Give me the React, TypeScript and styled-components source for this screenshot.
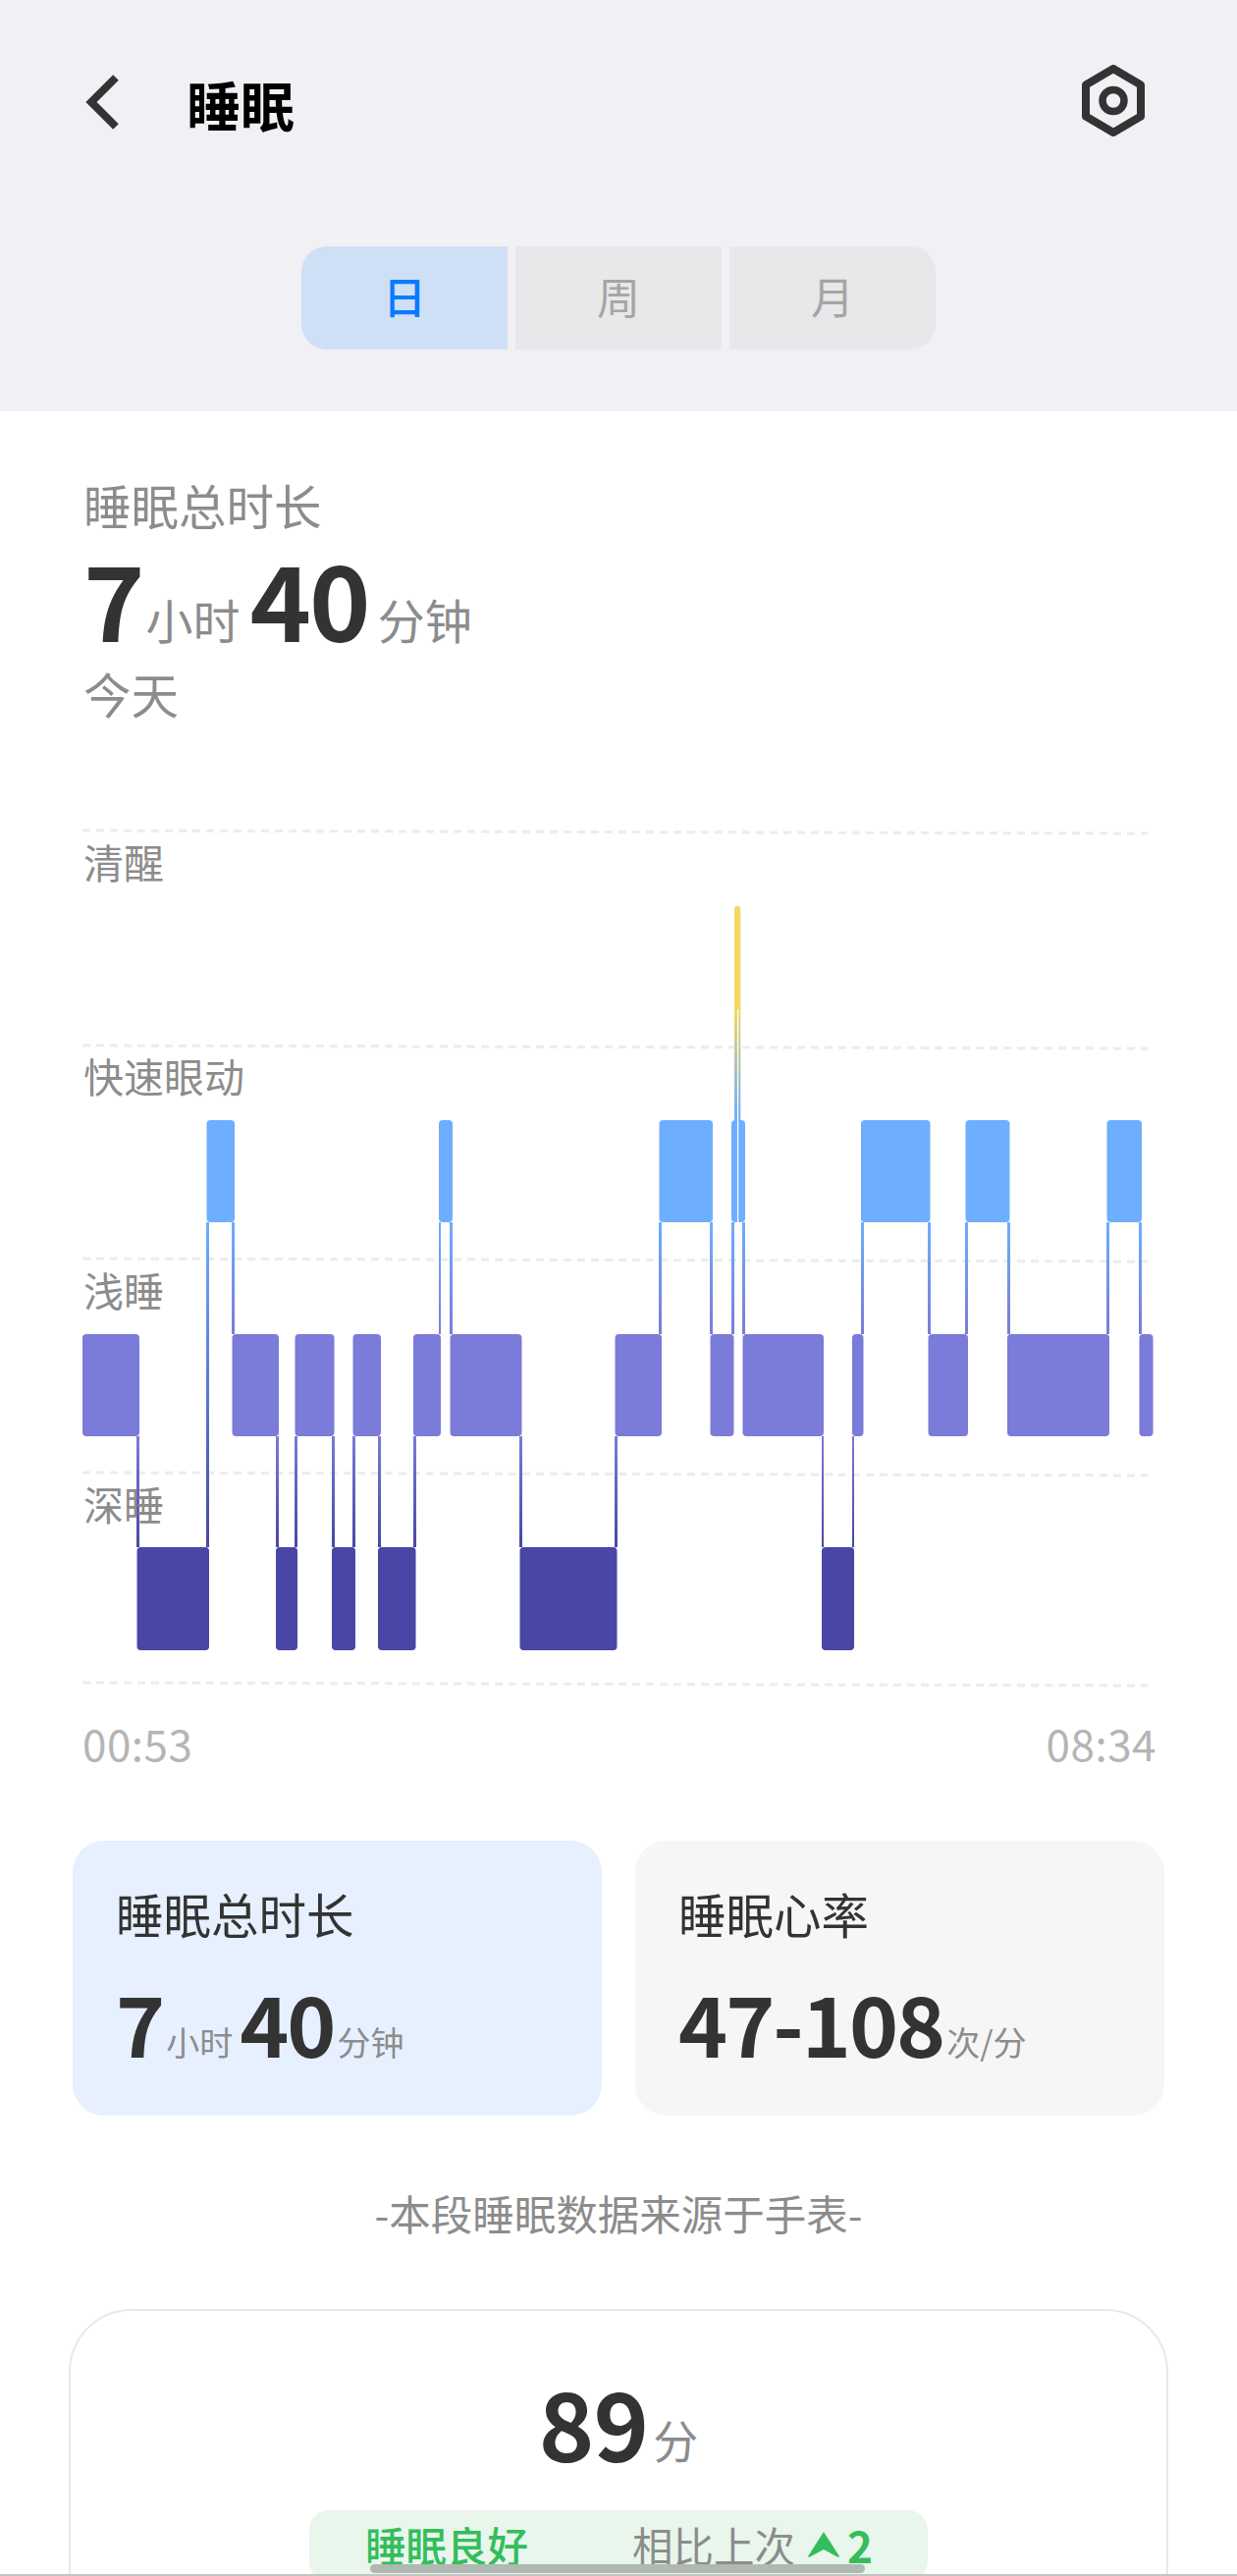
import React from 'react';
import styled, { createGlobalStyle } from 'styled-components';

type Stage = 'rem' | 'light' | 'deep';

interface Segment {
  stage: Stage;
  x0: number;
  x1: number;
}

const GlobalStyle = createGlobalStyle`
  html, body {
    margin: 0;
    padding: 0;
    background: #fff;
    font-family: "Noto Sans CJK SC", "Noto Sans", sans-serif;
  }
`;

const COLORS: Record<Stage, string> = {
  rem: '#6eaeff',
  light: '#7b7bd9',
  deep: '#4847a5',
};

// y range of each sleep stage on the chart
const LEVELS: Record<Stage, { top: number; bottom: number }> = {
  rem: { top: 1141, bottom: 1245 },
  light: { top: 1359, bottom: 1463 },
  deep: { top: 1576, bottom: 1681 },
};

const SEGMENTS: Segment[] = [
  { stage: 'light', x0: 84, x1: 142 },
  { stage: 'deep', x0: 139.5, x1: 213 },
  { stage: 'rem', x0: 210.5, x1: 239 },
  { stage: 'light', x0: 236.5, x1: 284 },
  { stage: 'deep', x0: 281, x1: 303 },
  { stage: 'light', x0: 300.5, x1: 340.5 },
  { stage: 'deep', x0: 338, x1: 362 },
  { stage: 'light', x0: 359.5, x1: 388 },
  { stage: 'deep', x0: 385, x1: 423.5 },
  { stage: 'light', x0: 421, x1: 449 },
  { stage: 'rem', x0: 447, x1: 461 },
  { stage: 'light', x0: 458.5, x1: 531.5 },
  { stage: 'deep', x0: 529.5, x1: 628.5 },
  { stage: 'light', x0: 626.5, x1: 674 },
  { stage: 'rem', x0: 671.5, x1: 726 },
  { stage: 'light', x0: 723.5, x1: 747.5 },
  { stage: 'rem', x0: 745, x1: 759 },
  { stage: 'light', x0: 756.5, x1: 839 },
  { stage: 'deep', x0: 837, x1: 870 },
  { stage: 'light', x0: 868, x1: 879.5 },
  { stage: 'rem', x0: 877, x1: 947.5 },
  { stage: 'light', x0: 945.5, x1: 986 },
  { stage: 'rem', x0: 983.5, x1: 1028.5 },
  { stage: 'light', x0: 1026, x1: 1130 },
  { stage: 'rem', x0: 1127.5, x1: 1163 },
  { stage: 'light', x0: 1160.5, x1: 1174.5 },
];

const GRID_LINES = [846, 1065, 1282, 1500, 1714];
const LANE_NAMES = ['清醒', '快速眼动', '浅睡', '深睡'];
const RANK: Record<Stage, number> = { rem: 0, light: 1, deep: 2 };

const SleepChart = () => {
  const links = SEGMENTS.slice(1).map((seg, i) => {
    const prev = SEGMENTS[i];
    const upper = RANK[prev.stage] < RANK[seg.stage] ? prev.stage : seg.stage;
    const lower = upper === prev.stage ? seg.stage : prev.stage;
    const x = Math.floor(seg.x0);
    return {
      key: i,
      x,
      width: Math.ceil(prev.x1) - x,
      y: LEVELS[upper].bottom,
      height: LEVELS[lower].top - LEVELS[upper].bottom,
      fill: `url(#${upper}-${lower})`,
    };
  });

  return (
    <ChartWrap>
      <ChartSvg viewBox="0 830 1260 900" width={1260} height={900}>
        <defs>
          <linearGradient id="rem-light" x1="0" x2="0" y1="0" y2="1">
            <stop offset="0" stopColor={COLORS.rem} />
            <stop offset="1" stopColor={COLORS.light} />
          </linearGradient>
          <linearGradient id="light-deep" x1="0" x2="0" y1="0" y2="1">
            <stop offset="0" stopColor={COLORS.light} />
            <stop offset="1" stopColor={COLORS.deep} />
          </linearGradient>
          <linearGradient id="rem-deep" x1="0" x2="0" y1="0" y2="1">
            <stop offset="0" stopColor={COLORS.rem} />
            <stop offset="1" stopColor={COLORS.deep} />
          </linearGradient>
          <linearGradient id="awake-rem" x1="0" x2="0" y1="0" y2="1">
            <stop offset="0" stopColor="#f6d862" />
            <stop offset="1" stopColor={COLORS.rem} />
          </linearGradient>
        </defs>

        {GRID_LINES.map((y) => (
          <line
            key={y}
            x1={84}
            y1={y}
            x2={1169}
            y2={y + 3}
            stroke="#ececec"
            strokeWidth={3}
            strokeDasharray="8 6"
          />
        ))}

        {links.map(({ key, ...link }) => (
          <rect key={key} {...link} />
        ))}

        {SEGMENTS.map((seg) => (
          <rect
            key={seg.x0}
            x={seg.x0}
            y={LEVELS[seg.stage].top}
            width={seg.x1 - seg.x0}
            height={LEVELS[seg.stage].bottom - LEVELS[seg.stage].top}
            rx={4}
            fill={COLORS[seg.stage]}
          />
        ))}

        {/* short wake-up spike, drawn over the rem block it rises from */}
        <rect x={748} y={1026} width={6.3} height={115} fill="url(#awake-rem)" />
        <rect x={748} y={923} width={6.3} height={105} rx={3} fill="#f6d862" />
        <rect x={751} y={1028} width={1.2} height={217} fill="#fff" />
      </ChartSvg>
      <LaneLabels>
        {LANE_NAMES.map((name) => (
          <LaneLabel key={name}>{name}</LaneLabel>
        ))}
      </LaneLabels>
    </ChartWrap>
  );
};

const App = () => {
  return (
    <Page>
      <GlobalStyle />
      <Header>
        <TopBar>
          <TitleGroup>
            <svg width="36" height="60" viewBox="0 0 36 60">
              <polyline
                points="31,6 6,31 31,56"
                fill="none"
                stroke="#333"
                strokeWidth="8"
              />
            </svg>
            <Title>睡眠</Title>
          </TitleGroup>
          <svg width="64" height="73" viewBox="0 0 64 73">
            <polygon
              points="32,4 60,20.5 60,52.5 32,69 4,52.5 4,20.5"
              fill="none"
              stroke="#333"
              strokeWidth="8"
              strokeLinejoin="round"
            />
            <circle cx="32" cy="36.5" r="11" fill="none" stroke="#333" strokeWidth="7.5" />
          </svg>
        </TopBar>
        <Tabs>
          <Tab $active>日</Tab>
          <Tab>周</Tab>
          <Tab>月</Tab>
        </Tabs>
      </Header>

      <Summary>
        <SummaryLabel>睡眠总时长</SummaryLabel>
        <BigRow>
          <BigNum>7</BigNum>
          <BigUnit>小时</BigUnit>
          <BigNum $gap={10}>40</BigNum>
          <BigUnit $gap={9}>分钟</BigUnit>
        </BigRow>
        <SummaryLabel>今天</SummaryLabel>
      </Summary>

      <SleepChart />

      <TimeRow>
        <span>00:53</span>
        <span>08:34</span>
      </TimeRow>

      <Cards>
        <Card $bg="#e6f0fe">
          <CardTitle>睡眠总时长</CardTitle>
          <CardValue>
            <CardNum>7</CardNum>
            <CardUnit>小时</CardUnit>
            <CardNum $gap={7}>40</CardNum>
            <CardUnit>分钟</CardUnit>
          </CardValue>
        </Card>
        <Card $bg="#f6f6f6">
          <CardTitle>睡眠心率</CardTitle>
          <CardValue>
            <CardNum>47-108</CardNum>
            <CardUnit>次/分</CardUnit>
          </CardValue>
        </Card>
      </Cards>

      <SourceNote>-本段睡眠数据来源于手表-</SourceNote>

      <ScoreCard>
        <ScoreRow>
          <ScoreNum>89</ScoreNum>
          <ScoreUnit>分</ScoreUnit>
        </ScoreRow>
        <ScorePill>
          <PillGood>睡眠良好</PillGood>
          <PillCompare>相比上次</PillCompare>
          <svg width="32" height="26" viewBox="0 0 32 26">
            <path d="M16 0 L32 25 Q32 26 30 25.5 L16 18 L2 25.5 Q0 26 0 25 Z" fill="#34bd5c" />
          </svg>
          <PillDelta>2</PillDelta>
        </ScorePill>
      </ScoreCard>

      <HomeIndicator />
      <BottomEdge />
    </Page>
  );
};

const Page = styled.div`
  position: relative;
  width: 1260px;
  height: 2624px;
  overflow: hidden;
  background: #fff;
`;

const Header = styled.header`
  height: 419px;
  box-sizing: border-box;
  padding-top: 66px;
  background: #f0f0f5;
`;

const TopBar = styled.div`
  display: flex;
  align-items: center;
  justify-content: space-between;
  height: 73px;
  padding: 0 94px 0 87px;
`;

const TitleGroup = styled.div`
  display: flex;
  align-items: center;
  gap: 67px;
`;

const Title = styled.h1`
  margin: 0;
  padding-top: 5px;
  font-size: 55px;
  line-height: 60px;
  font-weight: 700;
  color: #000;
`;

const Tabs = styled.div`
  display: flex;
  gap: 8px;
  width: 646px;
  height: 105px;
  margin: 112px auto 0;
  border-radius: 26px;
  overflow: hidden;
`;

const Tab = styled.div<{ $active?: boolean }>`
  flex: 1;
  display: flex;
  align-items: center;
  justify-content: center;
  padding-bottom: 5px;
  font-size: 44px;
  font-weight: ${({ $active }) => ($active ? 500 : 400)};
  color: ${({ $active }) => ($active ? '#0a7bff' : '#a5a5a5')};
  background: ${({ $active }) => ($active ? '#cfdff5' : '#e8e8ea')};
`;

const Summary = styled.section`
  padding: 65px 0 0 85px;
`;

const SummaryLabel = styled.div`
  font-size: 48.5px;
  line-height: 60px;
  color: #8c8c8c;
`;

const BigRow = styled.div`
  display: flex;
  align-items: flex-end;
  height: 132px;
  padding-bottom: 5px;
  box-sizing: border-box;
`;

const BigNum = styled.span<{ $gap?: number }>`
  margin: 0 0 10px ${({ $gap }) => $gap ?? 0}px;
  font-size: 106px;
  line-height: 106px;
  font-weight: 700;
  letter-spacing: -2px;
  color: #333;
`;

const BigUnit = styled.span<{ $gap?: number }>`
  margin: 0 0 17px ${({ $gap }) => $gap ?? 3}px;
  font-size: 48px;
  line-height: 47px;
  color: #8c8c8c;
`;

const ChartWrap = styled.div`
  position: relative;
  height: 900px;
  margin-top: 94px;
`;

const ChartSvg = styled.svg`
  display: block;
`;

const LaneLabels = styled.div`
  position: absolute;
  top: 27px;
  left: 85px;
  display: grid;
  grid-auto-rows: 218px;
`;

const LaneLabel = styled.div`
  font-size: 41px;
  line-height: 40px;
  color: #8c8c8c;
`;

const TimeRow = styled.div`
  display: flex;
  justify-content: space-between;
  margin-top: 20px;
  padding: 0 82px 0 84px;
  font-size: 44px;
  line-height: 50px;
  letter-spacing: 0.5px;
  color: #b5b5b5;
`;

const Cards = styled.div`
  display: grid;
  grid-template-columns: 539px 539px;
  gap: 34px;
  margin-top: 75px;
  padding: 0 74px;
`;

const Card = styled.div<{ $bg: string }>`
  height: 280px;
  box-sizing: border-box;
  padding: 50px 0 0 44px;
  border-radius: 32px;
  background: ${({ $bg }) => $bg};
`;

const CardTitle = styled.div`
  font-size: 48.5px;
  line-height: 48px;
  color: #333;
`;

const CardValue = styled.div`
  display: flex;
  align-items: flex-end;
  margin-top: 43px;
`;

const CardNum = styled.span<{ $gap?: number }>`
  margin: 0 0 8px ${({ $gap }) => $gap ?? 0}px;
  font-size: 85px;
  line-height: 85px;
  font-weight: 700;
  letter-spacing: -2px;
  color: #333;
`;

const CardUnit = styled.span`
  margin: 0 0 12px 3px;
  font-size: 34px;
  line-height: 34px;
  color: #8c8c8c;
`;

const SourceNote = styled.div`
  margin-top: 74px;
  text-align: center;
  font-size: 42.5px;
  line-height: 50px;
  color: #8c8c8c;
`;

const ScoreCard = styled.section`
  height: 340px;
  box-sizing: border-box;
  margin: 73px 70px 0;
  padding-top: 65px;
  border: 2px solid #e8e8e8;
  border-radius: 64px;
`;

const ScoreRow = styled.div`
  display: flex;
  align-items: flex-end;
  justify-content: center;
`;

const ScoreNum = styled.span`
  margin-bottom: 9px;
  font-size: 96px;
  line-height: 96px;
  font-weight: 700;
  letter-spacing: -1px;
  color: #333;
`;

const ScoreUnit = styled.span`
  margin: 0 0 17px 5px;
  font-size: 46px;
  line-height: 45px;
  color: #8c8c8c;
`;

const ScorePill = styled.div`
  display: flex;
  align-items: center;
  box-sizing: border-box;
  width: 630px;
  height: 72px;
  margin: 33px auto 0;
  padding: 0 0 2px 57px;
  border-radius: 20px;
  background: #e8f6ec;
  font-size: 41.5px;
`;

const PillGood = styled.span`
  color: #34bd5c;
  font-weight: 500;
`;

const PillCompare = styled.span`
  margin: 0 13px 0 106px;
  color: #8c8c8c;
`;

const PillDelta = styled.span`
  margin-left: 8px;
  font-size: 44px;
  font-weight: 700;
  color: #34bd5c;
`;

const HomeIndicator = styled.div`
  position: absolute;
  left: 377px;
  bottom: 3px;
  width: 504px;
  height: 9px;
  border-radius: 5px;
  background: #b0b8b2;
`;

const BottomEdge = styled.div`
  position: absolute;
  left: 0;
  right: 0;
  bottom: 0;
  height: 2px;
  background: #c4c4c4;
`;

export default App;
